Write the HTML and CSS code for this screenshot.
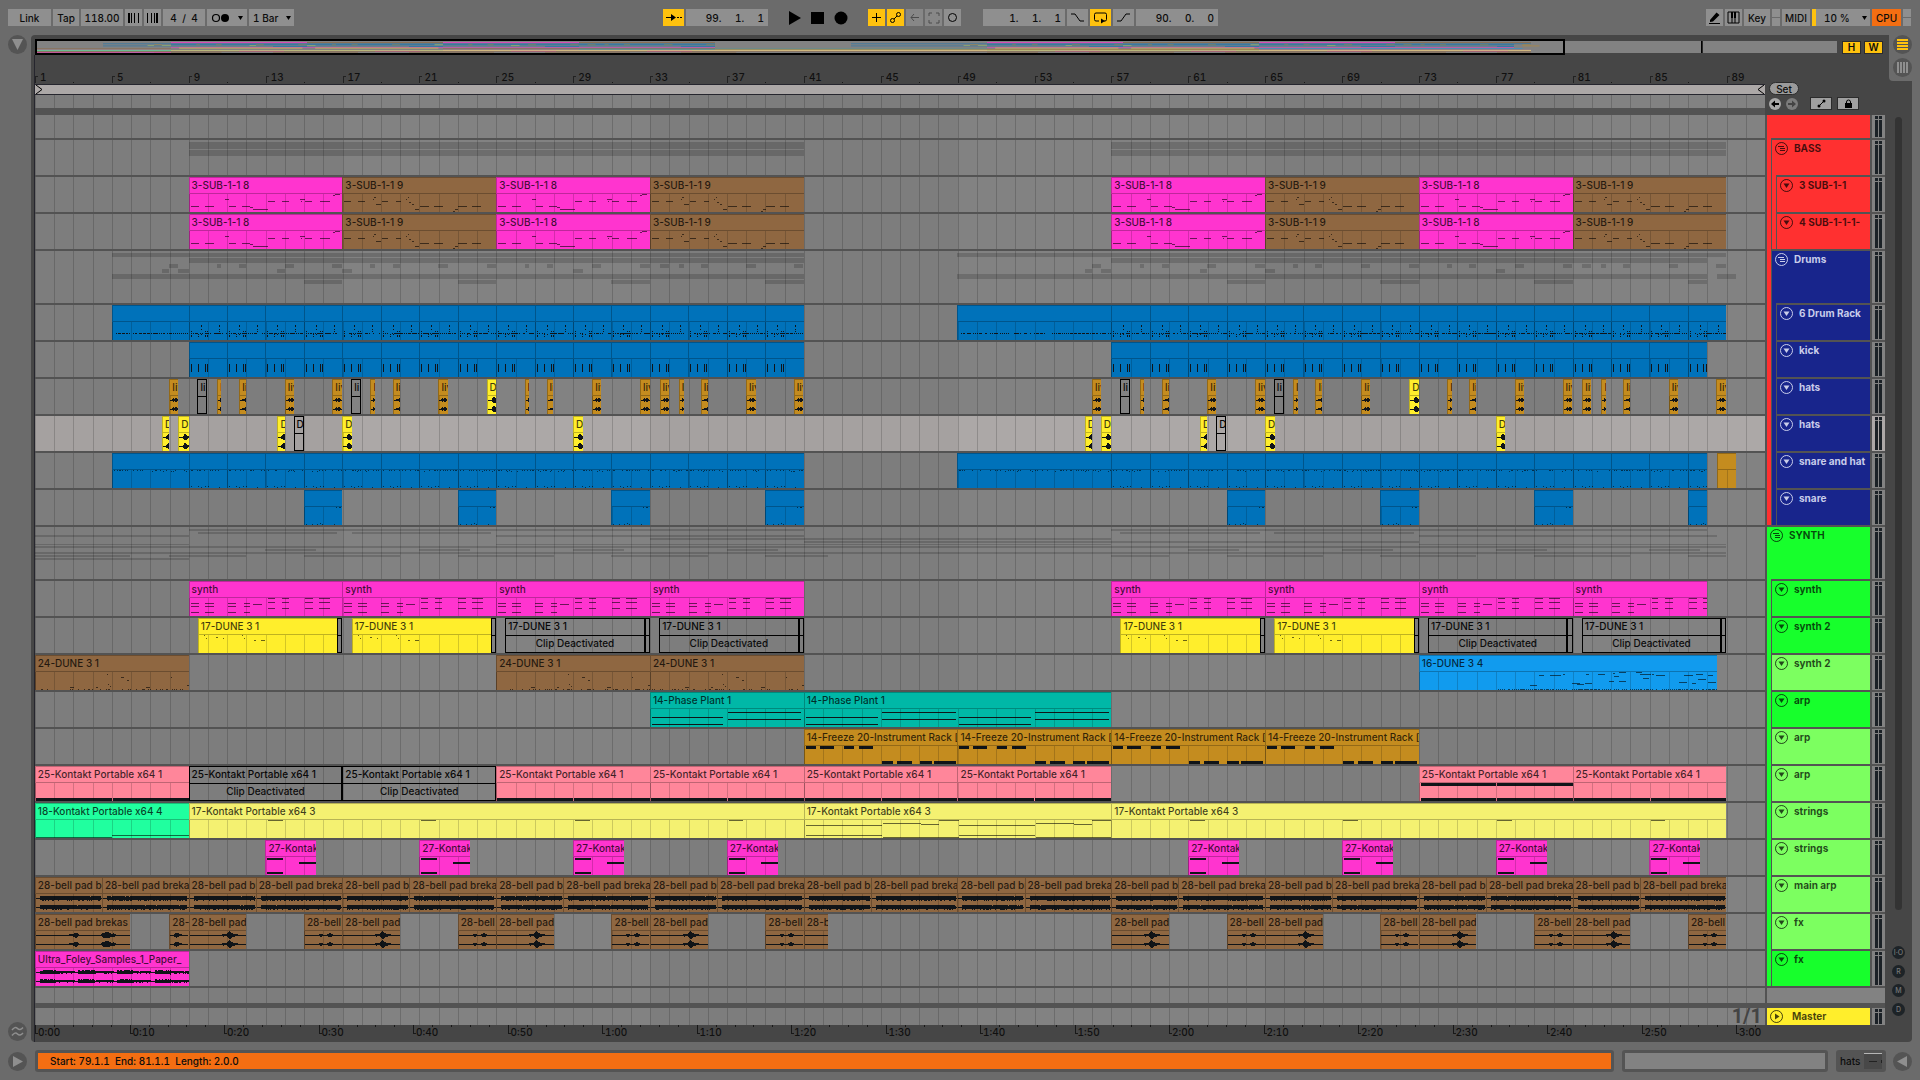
FILE: index.html
```html
<!DOCTYPE html>
<html lang="en">
<head>
<meta charset="utf-8">
<meta name="viewport" content="width=device-width, initial-scale=1">
<title>Arrangement</title>
<link rel="stylesheet" href="styles.css">
</head>
<body>
<header class="transport">
  <div class="cluster">
    <button class="ctl w43">Link</button>
    <button class="ctl w26">Tap</button>
    <input class="ctl w42 center" aria-label="Tempo" value="118.00">
    <button class="ctl w17" aria-label="Nudge down"><svg width="13" height="12" viewBox="0 0 13 12"><path d="M1 1h2v10H1zM4 1h1v10H4zM7 1h1v10H7zM11 1h1v10h-1z"/></svg></button>
    <button class="ctl w17" aria-label="Nudge up"><svg width="13" height="12" viewBox="0 0 13 12"><path d="M1 1h1v10H1zM5 1h1v10H5zM8 1h1v10H8zM10 1h2v10h-2z"/></svg></button>
    <input class="ctl w42 center" aria-label="Time signature" value="4  /  4">
    <button class="ctl w40" aria-label="Metronome"><svg width="32" height="12" viewBox="0 0 32 12"><circle cx="5" cy="6" r="3.5" fill="none" stroke="#000" stroke-width="1.2"/><circle cx="14" cy="6" r="4"/><path d="M27 4h5l-2.500 4z"/></svg></button>
    <span class="pick w45"><select class="ctl" aria-label="Quantization"><option>1 Bar</option></select></span>
  </div>
  <div class="cluster">
    <button class="ctl on w21" aria-label="Follow"><svg width="17" height="11" viewBox="0 0 17 11"><path d="M1 5h5V2l5 3.500L6 9V6H1zM12 5h2v1h-2zM15 5h2v1h-2z"/></svg></button>
    <input class="ctl w82 right" aria-label="Arrangement position" value="99.     1.     1">
    <div class="play">
      <button aria-label="Play"><svg width="14" height="16" viewBox="0 0 14 16"><path d="M1 1l12 7-12 7z"/></svg></button>
      <button aria-label="Stop"><svg width="14" height="14" viewBox="0 0 14 14"><path d="M0 1h13v12H0z"/></svg></button>
      <button aria-label="Record"><svg width="14" height="14" viewBox="0 0 14 14"><circle cx="7" cy="7" r="6.500"/></svg></button>
    </div>
    <button class="ctl on w17" aria-label="Overdub"><svg width="11" height="11" viewBox="0 0 11 11"><path d="M5 1h1v4h4v1H6v4H5V6H1V5h4z"/></svg></button>
    <button class="ctl on w17" aria-label="Automation arm"><svg width="13" height="13" viewBox="0 0 13 13" class="line"><circle cx="3.500" cy="9.500" r="2"/><circle cx="9.500" cy="3.500" r="2"/><path d="M5 8l3-3"/></svg></button>
    <button class="ctl dim w17" aria-label="Re-enable automation"><svg width="11" height="11" viewBox="0 0 11 11" class="line"><path d="M10 5.500H2M5 2L2 5.500 5 9"/></svg></button>
    <button class="ctl dim w17" aria-label="Capture"><svg width="12" height="12" viewBox="0 0 12 12" class="line"><path d="M1 4V1h3M8 1h3v3M11 8v3H8M4 11H1V8"/></svg></button>
    <button class="ctl w17" aria-label="Session record"><svg width="11" height="11" viewBox="0 0 11 11" class="line"><circle cx="5.500" cy="5.500" r="4"/></svg></button>
    <i class="space"></i>
    <input class="ctl w82 right" aria-label="Loop start" value="1.     1.     1">
    <button class="ctl w21" aria-label="Punch in"><svg width="15" height="11" viewBox="0 0 15 11" class="line"><path d="M1 2h4l5 7h4"/></svg></button>
    <button class="ctl on w21" aria-label="Loop"><svg width="15" height="13" viewBox="0 0 15 13" class="line"><path d="M6 10H3q-1.500 0-1.500-1.500v-5Q1.500 2 3 2h9q1.500 0 1.500 1.500v5Q13.500 10 12 10h-1"/><path d="M8 7.500v5L12 10z" fill="#000" stroke="none"/></svg></button>
    <button class="ctl w21" aria-label="Punch out"><svg width="15" height="11" viewBox="0 0 15 11" class="line"><path d="M1 9h4l5-7h4"/></svg></button>
    <input class="ctl w82 right" aria-label="Loop length" value="90.     0.     0">
  </div>
  <div class="cluster end">
    <button class="ctl w17" aria-label="Draw mode"><svg width="13" height="13" viewBox="0 0 13 13"><path d="M2 9l6.500-7.500 3 2.500L5 10.500 2 11zM1 12h11v1H1z"/></svg></button>
    <button class="ctl w17" aria-label="Computer keyboard"><svg width="13" height="13" viewBox="0 0 13 13"><path d="M1 1h11v11H1z" fill="none" stroke="#000"/><path d="M4 1h2v6H4zM7 1h2v6H7zM4.500 7h1v5h-1zM7.500 7h1v5h-1z"/></svg></button>
    <button class="ctl w26">Key</button>
    <span class="io"><i></i><i></i></span>
    <button class="ctl w28">MIDI</button>
    <span class="pick load w58"><select class="ctl" aria-label="CPU load"><option>10 %</option></select></span>
    <button class="ctl hot w29">CPU</button>
    <span class="io"><i></i><i></i></span>
  </div>
</header>

<div class="workspace">
  <aside class="rail">
    <button class="round" aria-label="Show browser"><svg width="13" height="13" viewBox="0 0 13 13"><path d="M1 1h11L6.500 12z"/></svg></button>
    <button class="round" aria-label="Groove pool"><svg width="13" height="13" viewBox="0 0 13 13"><path class="waves" d="M1 5q3-4 5.500-1.500T12 2.500M1 10.500q3-4 5.500-1.500T12 8"/></svg></button>
  </aside>
  <main class="panel">
    <div class="views">
      <button class="round active" aria-label="Arrangement view"><svg width="13" height="13" viewBox="0 0 13 13"><path d="M1 1h11v2H1zM1 4h11v2H1zM1 7h11v2H1zM1 10h11v2H1z"/></svg></button>
      <button class="round" aria-label="Session view"><svg width="13" height="13" viewBox="0 0 13 13"><path d="M1 1h2v11H1zM4 1h2v11H4zM7 1h2v11H7zM10 1h2v11h-2z"/></svg></button>
    </div>
    <div class="overview-row">
      <div class="overview">
        <svg class="overview-map" id="map" viewBox="0 0 106 23" preserveAspectRatio="none"></svg>
        <div class="viewport"></div>
      </div>
      <div class="fit">
        <button class="hw">H</button>
        <button class="hw">W</button>
      </div>
    </div>
    <div class="stage">
      <div class="sheet">
        <div class="top">
          <div class="top-time">
            <div class="bars" id="bars"></div>
            <div class="scrub">
              <svg width="8" height="9" viewBox="0 0 8 9" class="line"><path d="M1 0l6 4.500L1 9"/></svg>
              <svg width="8" height="9" viewBox="0 0 8 9" class="line"><path d="M7 0L1 4.500 7 9"/></svg>
            </div>
            <div class="lane gap"></div>
          </div>
          <div class="top-tools">
            <button class="set">Set</button>
            <div class="tools">
              <button class="dot" aria-label="Previous locator"><svg width="8" height="8" viewBox="0 0 8 8"><path d="M0 4l4-3.500V3h4v2H4v2.500z"/></svg></button>
              <button class="dot off" aria-label="Next locator"><svg width="8" height="8" viewBox="0 0 8 8"><path d="M8 4L4 .5V3H0v2h4v2.500z" fill="#444"/></svg></button>
              <button class="tool first" aria-label="Automation mode"><svg width="9" height="9" viewBox="0 0 9 9"><path d="M1.500 7.500l6-6" stroke="#000"/><circle cx="2" cy="7" r="1.500"/><circle cx="7" cy="2" r="1.500"/></svg></button>
              <button class="tool" aria-label="Lock envelopes"><svg width="9" height="10" viewBox="0 0 9 10"><path d="M1 4h7v5H1z"/><path d="M2.500 4V3q0-2 2-2t2 2v1" fill="none" stroke="#000"/></svg></button>
            </div>
          </div>
        </div>
        <div class="tracks" id="tracks"></div>
        <div class="row rest"><div class="lane"></div><div class="head"><div class="blank"></div></div></div>
        <div class="row master">
          <div class="lane"><span class="zoomlevel">1/1</span></div>
          <div class="head"><div class="title yellow"><svg class="fold" viewBox="0 0 13 13"><circle cx="6.500" cy="6.500" r="6" fill="none" stroke="currentColor"/><path d="M5 3.500l4.500 3-4.500 3z"/></svg><span>Master</span></div><div class="meter"><i></i><i></i></div></div>
        </div>
        <div class="clock" id="clock"></div>
      </div>
      <div class="side">
        <div class="vscroll"></div>
        <button class="mini">I·O</button>
        <button class="mini">R</button>
        <button class="mini">M</button>
        <button class="mini">D</button>
      </div>
    </div>
  </main>
</div>

<footer class="status">
  <button class="round" aria-label="Show info"><svg width="13" height="13" viewBox="0 0 13 13"><path d="M2 1l10 5.500L2 12z"/></svg></button>
  <div class="frame message">Start: 79.1.1&nbsp; End: 81.1.1&nbsp; Length: 2.0.0</div>
  <div class="frame spare"></div>
  <div class="frame device"><span>hats</span><svg width="18" height="16" viewBox="0 0 18 16"><path d="M0 0h18v16H0z" fill="#484848"/><path d="M0 0h18v1H0z" fill="#b5b5b5"/><path d="M5 8h8v1H5zM17 7h1v3h-1z" fill="#222"/></svg></div>
  <button class="round" aria-label="Hide detail"><svg width="13" height="13" viewBox="0 0 13 13"><path d="M11 1L1 6.500 11 12z"/></svg></button>
</footer>
<script src="app.js"></script>
</body>
</html>
```
FILE: styles.css
```css
* { box-sizing: border-box; }
:root {
  --bar: calc(100% / 90);
  --rule: #535353;
  --panel: #464646;
  --ctl: #8f8f8f;
}
body {
  margin: 0;
  min-height: 100vh;
  display: flex;
  flex-direction: column;
  background: #6b6b6b;
  color: #0c0c0c;
  font: 500 10px/16px Inter, "Liberation Sans", sans-serif;
  font-variant-numeric: tabular-nums;
}
button, input, select {
  font: inherit;
  font-variant-numeric: inherit;
  color: inherit;
  border: 0;
  border-radius: 0;
  margin: 0;
  padding: 0;
  background: none;
}
button { display: flex; align-items: center; justify-content: center; }
svg { display: block; flex: none; }
.line { fill: none; stroke: #000; }

/* transport */
.transport {
  display: grid;
  grid-template-columns: 655fr auto 693fr;
  padding: 9px 9px 9px 8px;
}
.cluster { display: flex; gap: 2px; height: 17px; }
.cluster.end { justify-content: flex-end; }
.ctl { height: 17px; background: var(--ctl); }
.ctl.on { background: #ffc20e; }
.ctl.hot { background: #f46e12; }
.ctl.dim { opacity: .8; }
.ctl.dim .line { stroke: #444; }
.center { text-align: center; }
.right { text-align: right; padding-right: 4px; }
.w17 { width: 17px; } .w21 { width: 21px; } .w26 { width: 26px; }
.w28 { width: 28px; } .w29 { width: 29px; } .w40 { width: 40px; }
.w42 { width: 42px; } .w43 { width: 43px; } .w45 { width: 45px; }
.w58 { width: 58px; } .w82 { width: 82px; }
.pick { position: relative; display: flex; background: var(--ctl); }
.pick select { appearance: none; flex: 1; padding-left: 4px; }
.pick::after {
  content: "";
  position: absolute;
  right: 3px;
  top: 7px;
  width: 5px;
  height: 4px;
  background: #000;
  clip-path: polygon(0 0, 100% 0, 50% 100%);
}
.pick.load { border-left: 4px solid #ffc20e; }
.pick.load select { padding-left: 8px; }
.play { display: flex; align-items: center; gap: 9px; padding: 0 18px; }
.space { width: 18px; }
.io { display: flex; flex-direction: column; gap: 1px; width: 8px; }
.io i { flex: 1; background: var(--ctl); }

/* panel */
.workspace { display: flex; flex: 1; padding-right: 8px; }
.rail {
  width: 31px;
  display: flex;
  flex-direction: column;
  justify-content: space-between;
  padding: 0 0 1px 8px;
}
.round {
  width: 19px;
  height: 19px;
  flex: none;
  border-radius: 50%;
  background: #545454;
}
.round path { fill: #8f8f8f; }
.round.active path { fill: #ffc20e; }
.round .waves { fill: none; stroke: #8f8f8f; stroke-width: 1.5; }
.panel {
  position: relative;
  flex: 1;
  min-width: 0;
  padding: 4px 0 0 3px;
  border-radius: 4px;
  background: var(--panel);
}
.views {
  position: absolute;
  top: 0;
  right: 0;
  display: flex;
  flex-direction: column;
  align-items: flex-end;
  gap: 4px;
  width: 23px;
  height: 46px;
  border-radius: 0 0 0 4px;
  background: #6b6b6b;
}
.overview-row { display: flex; align-items: center; gap: 5px; padding: 0 29px 0 1px; }
.overview { position: relative; flex: 1; height: 16px; padding: 2px 0; }
.overview-map { width: 100%; height: 12px; background: #828282; }
.viewport {
  position: absolute;
  inset: 0 auto 0 0;
  width: calc(100% * 90 / 106);
  border: 2px solid #000;
}
.fit { display: flex; gap: 3px; }
.hw { width: 19px; height: 13px; background: #ffc20e; border: 1px solid #2c2c2c; font-weight: 600; }

.stage { display: flex; }
.sheet { flex: 1; min-width: 0; border-left: 1px solid #26262e; }
.top, .row { display: grid; grid-template-columns: minmax(0, 1fr) 120px; }
.bars {
  display: grid;
  grid-template-columns: repeat(22, 4fr) 2fr;
  height: 29px;
  align-items: end;
  color: #101010;
}
.bars span {
  position: relative;
  height: 14px;
  padding-left: 5px;
  font-size: 10px;
  line-height: 14px;
}
.bars span::before {
  content: "";
  position: absolute;
  left: 0;
  bottom: 1px;
  width: 2px;
  height: 6px;
  border: solid #222;
  border-width: 1px 0 0 1px;
}
.bars span:not(:last-child)::after {
  content: "";
  position: absolute;
  left: 50%;
  bottom: 1px;
  width: 1px;
  height: 1px;
  background: #181818;
}
.scrub {
  display: flex;
  justify-content: space-between;
  height: 11px;
  border: solid #26262e;
  border-width: 1px 0;
  background: #aca8a7;
}
.gap { height: 13px; }
.top-time { border-bottom: 7px solid var(--rule); }
.top-tools { padding: 27px 0 0 4px; }
.set {
  width: 30px;
  height: 13px;
  border-radius: 7px;
  background: #9a9a9a;
  border: 1px solid #2c2c2c;
}
.tools { display: flex; align-items: center; gap: 5px; margin-top: 2px; }
.dot { width: 12px; height: 12px; border-radius: 50%; background: #a8a8a8; }
.dot.off { background: #7c7c7c; }
.tool { width: 22px; height: 13px; background: #a0a0a0; border: 1px solid #2c2c2c; }
.tool.first { margin-left: 7px; }

/* lanes */
.lane {
  --lines: repeating-linear-gradient(90deg, rgba(0,0,0,.17) 0 1px, transparent 1px var(--bar));
  position: relative;
  min-width: 0;
  overflow: hidden;
  background:
    var(--lines) 0 0 / 100% 17px no-repeat,
    repeating-linear-gradient(90deg, #7d7d7d 0 calc(100% * 16 / 90), #828282 calc(100% * 16 / 90) calc(100% * 32 / 90));
}
.lane::after {
  content: "";
  position: absolute;
  inset: 17px 0 0;
  background: var(--lines);
  pointer-events: none;
}
.row .lane { margin-bottom: 2px; }
.tracks { background: var(--rule); }
.track .lane { height: 35px; }
.folder .lane { height: 52px; }
.brief .lane { height: 23px; }
.low .lane { height: 35px; }
.chosen .lane {
  background:
    var(--lines) 0 0 / 100% 17px no-repeat,
    repeating-linear-gradient(90deg, #a5a1a0 0 calc(100% * 16 / 90), #aca8a7 calc(100% * 16 / 90) calc(100% * 32 / 90));
}
.chosen .meter { background-color: #aca8a7; }
.rest { border-bottom: 5px solid var(--rule); }
.rest .lane { height: 15px; margin: 0; }
.master .lane { height: 17px; margin: 0; }
.zoomlevel {
  display: block;
  padding-right: 3px;
  text-align: right;
  font: 700 20px/17px Roboto, sans-serif;
  color: #444;
}
.strip { position: absolute; background: rgba(0,0,0,.16); }

/* clips */
.clip {
  position: absolute;
  top: 0;
  height: 35px;
  overflow: hidden;
  border: solid rgba(0,0,0,.25);
  border-width: 1px 0 0 1px;
}
.clip-name {
  height: 16px;
  padding-left: 2px;
  border-bottom: 1px solid rgba(0,0,0,.25);
  line-height: 15px;
  white-space: pre;
  overflow: hidden;
  color: rgba(0,0,0,.75);
}
.clip-name, .title { font-variant-numeric: normal; }
.clip-body { width: 100%; height: 18px; shape-rendering: crispEdges; fill: #101418; }
.clip-body.soft { fill: rgba(0,0,0,.58); }
.clip.mute { border: 1px solid #000; }
.mute .clip-name { height: 17px; border-color: #000; color: #080808; }
.mute .clip-note { line-height: 15px; text-align: center; white-space: nowrap; overflow: hidden; height: 16px; }
.pink { background-color: #ff34cf; fill: #ff34cf; }
.brown { background-color: #8f6741; fill: #8f6741; }
.blue { background-color: #0072ba; fill: #0072ba; }
.sky { background-color: #119bee; fill: #119bee; }
.amber { background-color: #c48c1f; fill: #c48c1f; }
.yellow { background-color: #ffee2c; fill: #ffee2c; }
.lemon { background-color: #f4f171; fill: #f4f171; }
.teal { background-color: #00b8a7; fill: #00b8a7; }
.rose { background-color: #ff869a; fill: #ff869a; }
.mint { background-color: #20ff9f; fill: #20ff9f; }
.red { background-color: #ff3030; }
.navy { background-color: #18258c; }
.green { background-color: #17ff2c; }
.lime { background-color: #7cff60; }

/* track headers */
.head { display: flex; border-left: 2px solid var(--rule); background: var(--rule); }
.spine { width: 5px; flex: none; border-right: 1px solid var(--rule); }
.spine.stop { margin-bottom: 2px; }
.title {
  position: relative;
  flex: 1;
  min-width: 0;
  display: flex;
  gap: 6px;
  padding: 2px 0 0 3px;
  margin-bottom: 2px;
  overflow: hidden;
  white-space: nowrap;
  font-weight: 700;
  line-height: 12px;
  color: rgba(0,0,0,.72);
}
.title svg { fill: currentColor; }
.title.navy { color: #c9cdea; }
.title.parent { margin-bottom: 0; }
.title.parent::after {
  content: "";
  position: absolute;
  inset: auto 0 0 4px;
  height: 2px;
  background: var(--rule);
}
.fold { width: 13px; height: 13px; }
.meter {
  display: flex;
  gap: 1px;
  width: 13px;
  flex: none;
  margin: 0 0 2px 2px;
  padding: 1px 3px;
  background: #828282;
}
.meter i { flex: 1; background: linear-gradient(#828282, #828282) 0 3px / 100% 1px no-repeat #1b2126; }
.blank { flex: 1; background: #828282; }
.master .title, .master .meter { margin-bottom: 0; }
.master .title { gap: 9px; }

.clock {
  display: flex;
  height: 17px;
  overflow: hidden;
  margin-right: 120px;
  line-height: 15px;
  color: #101010;
}
.clock span {
  flex: none;
  padding-left: 3px;
  background: repeating-linear-gradient(90deg, #181818 0 1px, transparent 1px 20%) 0 0 / 100% 2px no-repeat;
  position: relative;
}
.clock span::before {
  content: "";
  position: absolute;
  left: 0;
  top: 0;
  width: 2px;
  height: 8px;
  border: solid #181818;
  border-width: 0 0 1px 1px;
}

.side {
  width: 27px;
  display: flex;
  flex-direction: column;
  align-items: center;
  gap: 6px;
  padding: 62px 0 26px;
}
.vscroll { flex: 1; width: 7px; border-radius: 4px; background: #333; margin-bottom: 30px; }
.mini {
  width: 13px;
  height: 13px;
  border-radius: 50%;
  background: #1d2327;
  color: #777;
  font-size: 7px;
  line-height: 13px;
}

/* status */
.status { display: flex; align-items: center; padding: 8px; }
.frame { height: 22px; border: 3px solid #545454; border-radius: 3px; }
.message { flex: 1; margin-left: 8px; padding-left: 12px; background: #f46e12; }
.spare { width: 206px; margin: 0 8px; background: #828282; }
.device { display: flex; gap: 4px; width: 50px; margin-right: 7px; padding-left: 1px; background: #545454; }
```
FILE: app.js
```js
const BARS = 90;
const U = 57.6; // drawing units per bar, three to a pixel of height
const pct = n => (n / BARS * 100).toFixed(4) + '%';
const at = bar => pct(bar - 1.01); // a clip's edge falls just ahead of its bar line
const el = (cls, parent, tag = 'div') => {
  const e = document.createElement(tag);
  e.className = cls;
  if (parent) parent.appendChild(e);
  return e;
};
const box = (x, y, w, h = 3) => `M${x} ${Math.round(y / 3) * 3}h${w}v${h}h${-w}z`;
const notes = list => list.map(n => box(...n)).join('');
const times = (list, step, count) =>
  Array.from({ length: count }, (_, i) => list.map(([x, ...r]) => [x + i * step, ...r])).flat();

let seed = 7;
const rnd = () => (seed = (seed * 16807) % 2147483647) / 2147483647;

// two stacked channels around the centre lines of the clip body
const wave = (bars, amp) => {
  let d = '';
  for (const c of [12, 39]) {
    d += `M0 ${c - 1}h${bars * U}v3h${-bars * U}z`;
    for (let x = 0; x < bars * U; x += 3) {
      const a = amp(x, bars * U);
      if (a > 1.5) d += `M${x} ${(c - a + 0.5).toFixed(1)}h3v${(2 * a).toFixed(1)}h-3z`;
    }
  }
  return d;
};
const bumps = list => x => list.reduce((s, [c, w, a]) => s + a * Math.exp(-(((x - c) / w) ** 2)), 0);

const drumHit = (x, ys) => ys.map(y => [x, y, 3]);
const drumBar = [
  ...drumHit(2, [27, 33, 39, 42]), ...drumHit(24, [36, 42]), ...drumHit(33, [9, 12, 21, 36]),
  ...drumHit(45, [27, 33, 39, 42]), ...drumHit(53, [27, 33, 39, 42]), ...drumHit(90, [9, 12, 21, 27]),
];
const ticks = (bars, y) => {
  const out = [];
  for (let x = 2; x < bars * U; x += 6) if (rnd() > .18) out.push([x, y, rnd() > .7 ? 6 : 3]);
  return out;
};
const hatTicks = bars => {
  const out = [];
  for (let x = 2; x < bars * U; x += 5) if (rnd() > .45) out.push([x, rnd() > .85 ? 3 : 0, 3]);
  return out;
};
const triple = (x, w, ...ys) => ys.map(y => [x, y, w]);

const art = {
  sub8: () => notes([[3,36,23],[45,36,26],[105,15,14],[117,36,23],[158,36,24],[182,39,9],[189,45,45],[234,21,23],[276,21,23],[332,15,15],[335,21,4],[348,21,20],[392,21,30],[432,3,5],[436,0,16]]),
  sub9: () => notes([[3,21,20],[45,21,20],[89,15,4],[95,9,5],[101,30,15],[118,21,19],[159,21,17],[189,15,4],[195,9,5],[200,24,6],[207,30,8],[216,45,14],[231,36,29],[273,36,28],[333,51,6],[339,45,8],[348,36,26],[389,36,27]]),
  line: b => notes(ticks(b, 33)),
  drum: b => notes([...ticks(b, 33), ...drumBar]),
  kick: () => notes([[2,15,3,24],[24,15,3,24],[45,15,3,24],[53,15,3,24]]),
  snh: b => notes([...hatTicks(b), ...(b > 2 ? [] : [[2,48,3],[24,48,3],[33,51,3],[45,48,3],[54,48,3],[90,51,3]])]),
  snare: b => notes([[94,0,6],[104,0,6],[2,51,3],[21,51,3],[37,51,3],[45,48,3],[52,51,3],[88,51,3]].filter(n => n[0] < b * U)),
  synth: b => notes([
    ...triple(3,23,15,24,42), ...triple(46,25,15,24,42), ...triple(116,24,15,24,42), ...triple(162,20,15,24,42),
    [189,19,29], ...triple(234,21,0,12,30), ...triple(276,22,0,12,30), ...triple(346,26,0,12,30), ...triple(390,31,0,12,30),
  ].filter(n => n[0] < b * U)),
  dune: () => notes([[14,0,3],[22,9,3],[50,6,6],[73,9,3],[130,0,3],[137,9,3],[167,15,6],[188,15,12]]),
  dune1: b => notes([[214,6,3],[255,15,9],[275,24,6],[218,36,3],[222,42,3],[102,45,12],[180,45,6],[333,45,12],[408,15,3],[455,39,6],
    ...ticks(b, 51).filter(() => rnd() > .45)]),
  dune4: b => notes(Array.from({ length: 60 }, () => {
    const x = 232 + rnd() * (b * U - 250);
    return [x, rnd() > .5 ? rnd() * 12 : rnd() * 42, 6 + rnd() * 20];
  }).filter((_, i) => i % 2).concat(ticks(b, 51).filter(n => n[0] > 230))),
  phase: b => notes(times([[3,24,215],[3,45,215],[231,9,222],[231,30,222]], 8 * U, b / 8)),
  freeze: () => notes([[2,0,32,9],[45,0,43,9],[117,0,30,9],[162,0,43,9],[233,45,32,9],[277,45,45,9],[348,45,34,9],[390,45,66,9]]),
  floor: () => notes([[0,45,230,9],[232,45,229,9]]),
  both: () => notes([[2,0,228,9],[232,0,229,9],[2,45,228,9],[232,45,229,9]]),
  mint: () => notes([[0,51,228],[228,45,233]]),
  str: b => notes(times([[234,0,44]], 8 * U, b / 8)),
  str2: b => notes(times([[2,15,230],[233,9,115],[348,12,55],[403,0,61],[2,45,230],[233,51,230]], 8 * U, b / 8)),
  stab: () => notes([[3,3,50,6],[102,15,50,6],[3,45,50,6]]),
  bell: b => wave(b, (x, w) => x < 12 || x > w - 6 ? 1 : 5 + rnd() * 3),
  paper: b => wave(b, x => { const p = x % 116; return p < 10 ? 1 : (p < 60 ? 4 : 2) + rnd() * 3; }),
  long: b => wave(b, bumps([[100,6,3],[118,9,8],[205,8,6],[218,10,8],[235,6,5]])),
  tail: b => wave(b, bumps([[102,6,4],[120,7,10],[134,14,4]])),
  head: b => wave(b, bumps([[47,7,5],[76,8,6]])),
  bit: b => wave(b, bumps([[18,8,7],[32,8,3]])),
  hit: b => wave(b, bumps([[9,4,6],[20,5,6]])),
  hitD: b => wave(b, bumps([[20,9,9]])),
  none: b => wave(b, () => 0),
};
const solid = new Set(['line','drum','kick','phase','freeze','floor','both','stab','bell','paper','long','tail','head','bit','hit','hitD','none']);

const run = (from, to, step, name, color, kind) => {
  const out = [];
  for (let s = from; s < to; s += step) out.push([s, Math.min(s + step, to), name, color, kind]);
  return out;
};
const sides = list => [...list, ...list.map(([s, e, ...r]) => [s + 48, e + 48, ...r])];

const sub = sides([9, 17, 25, 33].map((s, i) =>
  i % 2 ? [s, s + 8, '3-SUB-1-1 9', 'brown', 'sub9'] : [s, s + 8, '3-SUB-1-1 8', 'pink', 'sub8']));
const h = (s, w) => [s, s + w, 'live', 'amber', 'hit'];
const hats1 = sides([h(8,.47), [9.46,9.98,'li','mute'], h(10.48,.22), h(11.64,.34), h(14,.47), h(16.48,.5), [17.46,17.98,'li','mute'],
  h(18.46,.25), h(19.62,.36), h(22,.47), [24.5,25,'D','yellow','hitD'], h(26.48,.25), h(27.62,.36), h(30,.48),
  h(32.48,.5), h(33.5,.48), h(34.5,.25), h(35.64,.36), h(38,.5), h(40.48,.5)]);
const hats2 = sides([[7.62,8,'D','yellow','hitD'], [8.46,9,'D','yellow','hitD'], [13.62,14,'D','yellow','hitD'],
  [14.46,14.98,'D','mute'], [17,17.5,'D','yellow','hitD'], [29,29.5,'D','yellow','hitD']]);
const dune = [9, 17, 25, 33, 57, 65, 73, 81].flatMap((s, i) => {
  const off = i % 4 > 1;
  return [[s + .48, s + 7.73, '17-DUNE 3 1', off ? 'mute' : 'yellow', off ? 'Clip Deactivated' : 'dune'], [s + 7.73, s + 8, '', 'mute']];
});
const kp = (s, kind = 'floor') => [s, s + 8, '25-Kontakt Portable x64 1', 'rose', kind];
const kpOff = s => [s, s + 8, '25-Kontakt Portable x64 1', 'mute', 'Clip Deactivated'];
const bell = (s, e, kind) => [s, e, '28-bell pad brekas .', 'brown', kind];
const bells = [];
for (let s = 1; s < 89; s += 8) bells.push(bell(s, s + 3.49, 'bell'), bell(s + 3.49, s + 8, 'bell'));

const tracks = [
  { name: '', color: 'red', depth: [], parent: 1, brief: 1 },
  { name: 'BASS', color: 'red', depth: ['red'], parent: 1, low: 1 },
  { name: '3 SUB-1-1', color: 'red', depth: ['red', 'red'], clips: sub },
  { name: '4 SUB-1-1-1-', color: 'red', depth: ['red', 'red'], stop: 1, clips: sub },
  { name: 'Drums', color: 'navy', depth: ['red'], parent: 1 },
  { name: '6 Drum Rack', color: 'navy', depth: ['red', 'navy'], clips: [
    [5, 9, '', 'blue', 'line'], ...run(9, 41, 2, '', 'blue', 'drum'), [49, 57, '', 'blue', 'line'], ...run(57, 89, 2, '', 'blue', 'drum')] },
  { name: 'kick', color: 'navy', depth: ['red', 'navy'], clips: [...run(9, 41, 2, '', 'blue', 'kick'), ...run(57, 88, 2, '', 'blue', 'kick')] },
  { name: 'hats', color: 'navy', depth: ['red', 'navy'], clips: hats1 },
  { name: 'hats', color: 'navy', depth: ['red', 'navy'], chosen: 1, clips: hats2 },
  { name: 'snare and hat', color: 'navy', depth: ['red', 'navy'], clips: [
    [5, 9, '', 'blue', 'snh'], ...run(9, 41, 2, '', 'blue', 'snh'), [49, 57, '', 'blue', 'snh'], ...run(57, 88, 2, '', 'blue', 'snh'), [88.5, 89.5, '', 'amber']] },
  { name: 'snare', color: 'navy', depth: ['red', 'navy'], stop: 2, clips:
    [15, 23, 31, 39, 63, 71, 79, 87].map(s => [s, Math.min(s + 2, 88), '', 'blue', 'snare']) },
  { name: 'SYNTH', color: 'green', depth: [], parent: 1 },
  { name: 'synth', color: 'green', depth: ['green'], clips: [...run(9, 41, 8, 'synth', 'pink', 'synth'), ...run(57, 88, 8, 'synth', 'pink', 'synth')] },
  { name: 'synth 2', color: 'green', depth: ['green'], clips: dune },
  { name: 'synth 2', color: 'lime', depth: ['green'], clips: [
    ...[1, 25, 33].map(s => [s, s + 8, '24-DUNE 3 1', 'brown', 'dune1']), [73, 88.5, '16-DUNE 3 4', 'sky', 'dune4']] },
  { name: 'arp', color: 'green', depth: ['green'], clips: [[33, 41, '14-Phase Plant 1', 'teal', 'phase'], [41, 57, '14-Phase Plant 1', 'teal', 'phase']] },
  { name: 'arp', color: 'lime', depth: ['green'], clips: run(41, 73, 8, '14-Freeze 20-Instrument Rack [', 'amber', 'freeze') },
  { name: 'arp', color: 'lime', depth: ['green'], clips: [kp(1), kpOff(9), kpOff(17), kp(25), kp(33), kp(41), kp(49), kp(73, 'both'), kp(81)] },
  { name: 'strings', color: 'lime', depth: ['green'], clips: [
    [1, 9, '18-Kontakt Portable x64 4', 'mint', 'mint'], [9, 41, '17-Kontakt Portable x64 3', 'lemon', 'str'],
    [41, 57, '17-Kontakt Portable x64 3', 'lemon', 'str2'], [57, 89, '17-Kontakt Portable x64 3', 'lemon', 'str']] },
  { name: 'strings', color: 'lime', depth: ['green'], clips: sides([13, 21, 29, 37].map(s => [s, s + 2.65, '27-Kontakt', 'pink', 'stab'])) },
  { name: 'main arp', color: 'lime', depth: ['green'], clips: bells },
  { name: 'fx', color: 'lime', depth: ['green'], clips: [
    bell(1, 5.97, 'long'), bell(8, 9, 'bit'), bell(9, 11.97, 'tail'), bell(15, 17, 'head'), bell(17, 20, 'tail'), bell(23, 25, 'head'),
    bell(25, 28, 'tail'), bell(31, 33, 'head'), bell(33, 36, 'tail'), bell(39, 41, 'head'), bell(41, 42.25, 'none'), bell(57, 60, 'tail'),
    bell(63, 65, 'head'), bell(65, 68, 'tail'), bell(71, 73, 'head'), bell(73, 76, 'tail'), bell(79, 81, 'head'), bell(81, 84, 'tail'), bell(87, 89, 'head')] },
  { name: 'fx', color: 'green', depth: ['green'], stop: 1, clips: [[1, 9, 'Ultra_Foley_Samples_1_Paper_', 'pink', 'paper']] },
];

const foldIcon = parent => `<svg class="fold" viewBox="0 0 13 13"><circle cx="6.5" cy="6.5" r="6" fill="none" stroke="currentColor"/>${
  parent ? '<path d="M3 4h6v1H3zM5 6h5v1H5zM5 8h5v1H5z"/>' : '<path d="M3.500 4.500h6l-3 4.500z"/>'}</svg>`;

const drawClip = (lane, [s, e, name, color, kind]) => {
  const c = el('clip ' + color, lane);
  c.style.left = at(s);
  c.style.width = pct(e - s);
  el('clip-name', c).textContent = name;
  if (color === 'mute') {
    el('clip-note', c).textContent = kind || '';
    return;
  }
  const d = art[kind] ? art[kind](e - s) : '';
  c.insertAdjacentHTML('beforeend',
    `<svg class="clip-body${solid.has(kind) ? '' : ' soft'}" viewBox="0 0 ${(e - s) * U} 54" preserveAspectRatio="none"><path d="${d}"/></svg>`);
};

// folded groups show their members as thin strips
const drawStrips = (lane, members, tops) => members.forEach((t, i) => {
  for (const [s, e, , color] of t.clips) {
    if (color === 'mute') continue;
    const b = el('strip', lane);
    b.style.left = at(s);
    b.style.width = pct(e - s);
    b.style.top = tops[i][0] + 'px';
    b.style.height = tops[i][1] + 'px';
  }
});

const root = document.getElementById('tracks');
tracks.forEach((t, i) => {
  const row = el('row ' + (t.parent ? (t.brief ? 'brief' : t.low ? 'low' : 'folder') : 'track') + (t.chosen ? ' chosen' : ''), root);
  const lane = el('lane', row);
  const head = el('head', row);
  t.depth.forEach((c, k) => el(`spine ${c}${t.stop > t.depth.length - 1 - k ? ' stop' : ''}`, head));
  const title = el(`title ${t.color}${t.parent ? ' parent' : ''}`, head);
  if (t.name) {
    title.innerHTML = foldIcon(t.parent);
    el('', title, 'span').textContent = t.name;
  }
  el('meter', head).innerHTML = '<i></i><i></i>';
  (t.clips || []).forEach(c => drawClip(lane, c));
  if (i === 1) drawStrips(lane, tracks.slice(2, 4), [[2, 7], [10, 6]]);
  if (i === 4) drawStrips(lane, tracks.slice(5, 11), [[2, 4], [7, 5], [13, 4], [18, 4], [23, 5], [29, 4]]);
  if (i === 11) drawStrips(lane, tracks.slice(12), [[2, 2], [5, 2], [8, 2], [11, 2], [14, 2], [17, 1], [19, 2], [22, 2], [25, 2], [28, 2], [31, 2]]);
});

document.getElementById('map').innerHTML = tracks.map((t, i) => (t.clips || [])
  .filter(c => c[3] !== 'mute')
  .map(c => `<rect class="${c[3]}" x="${c[0] - 1}" y="${i}" width="${c[1] - c[0]}" height="1" opacity=".9"/>`).join('')).join('')
  + '<rect x="98" y="0" width=".1" height="23"/>';

const bars = document.getElementById('bars');
for (let n = 1; n <= 89; n += 4) el('', bars, 'span').textContent = n;

const clock = document.getElementById('clock');
for (let s = 0; s <= 180; s += 10) {
  const c = el('', clock, 'span');
  c.style.width = pct(10 * 118 / 240);
  c.textContent = `${Math.floor(s / 60)}:${String(s % 60).padStart(2, '0')}`;
}
```
